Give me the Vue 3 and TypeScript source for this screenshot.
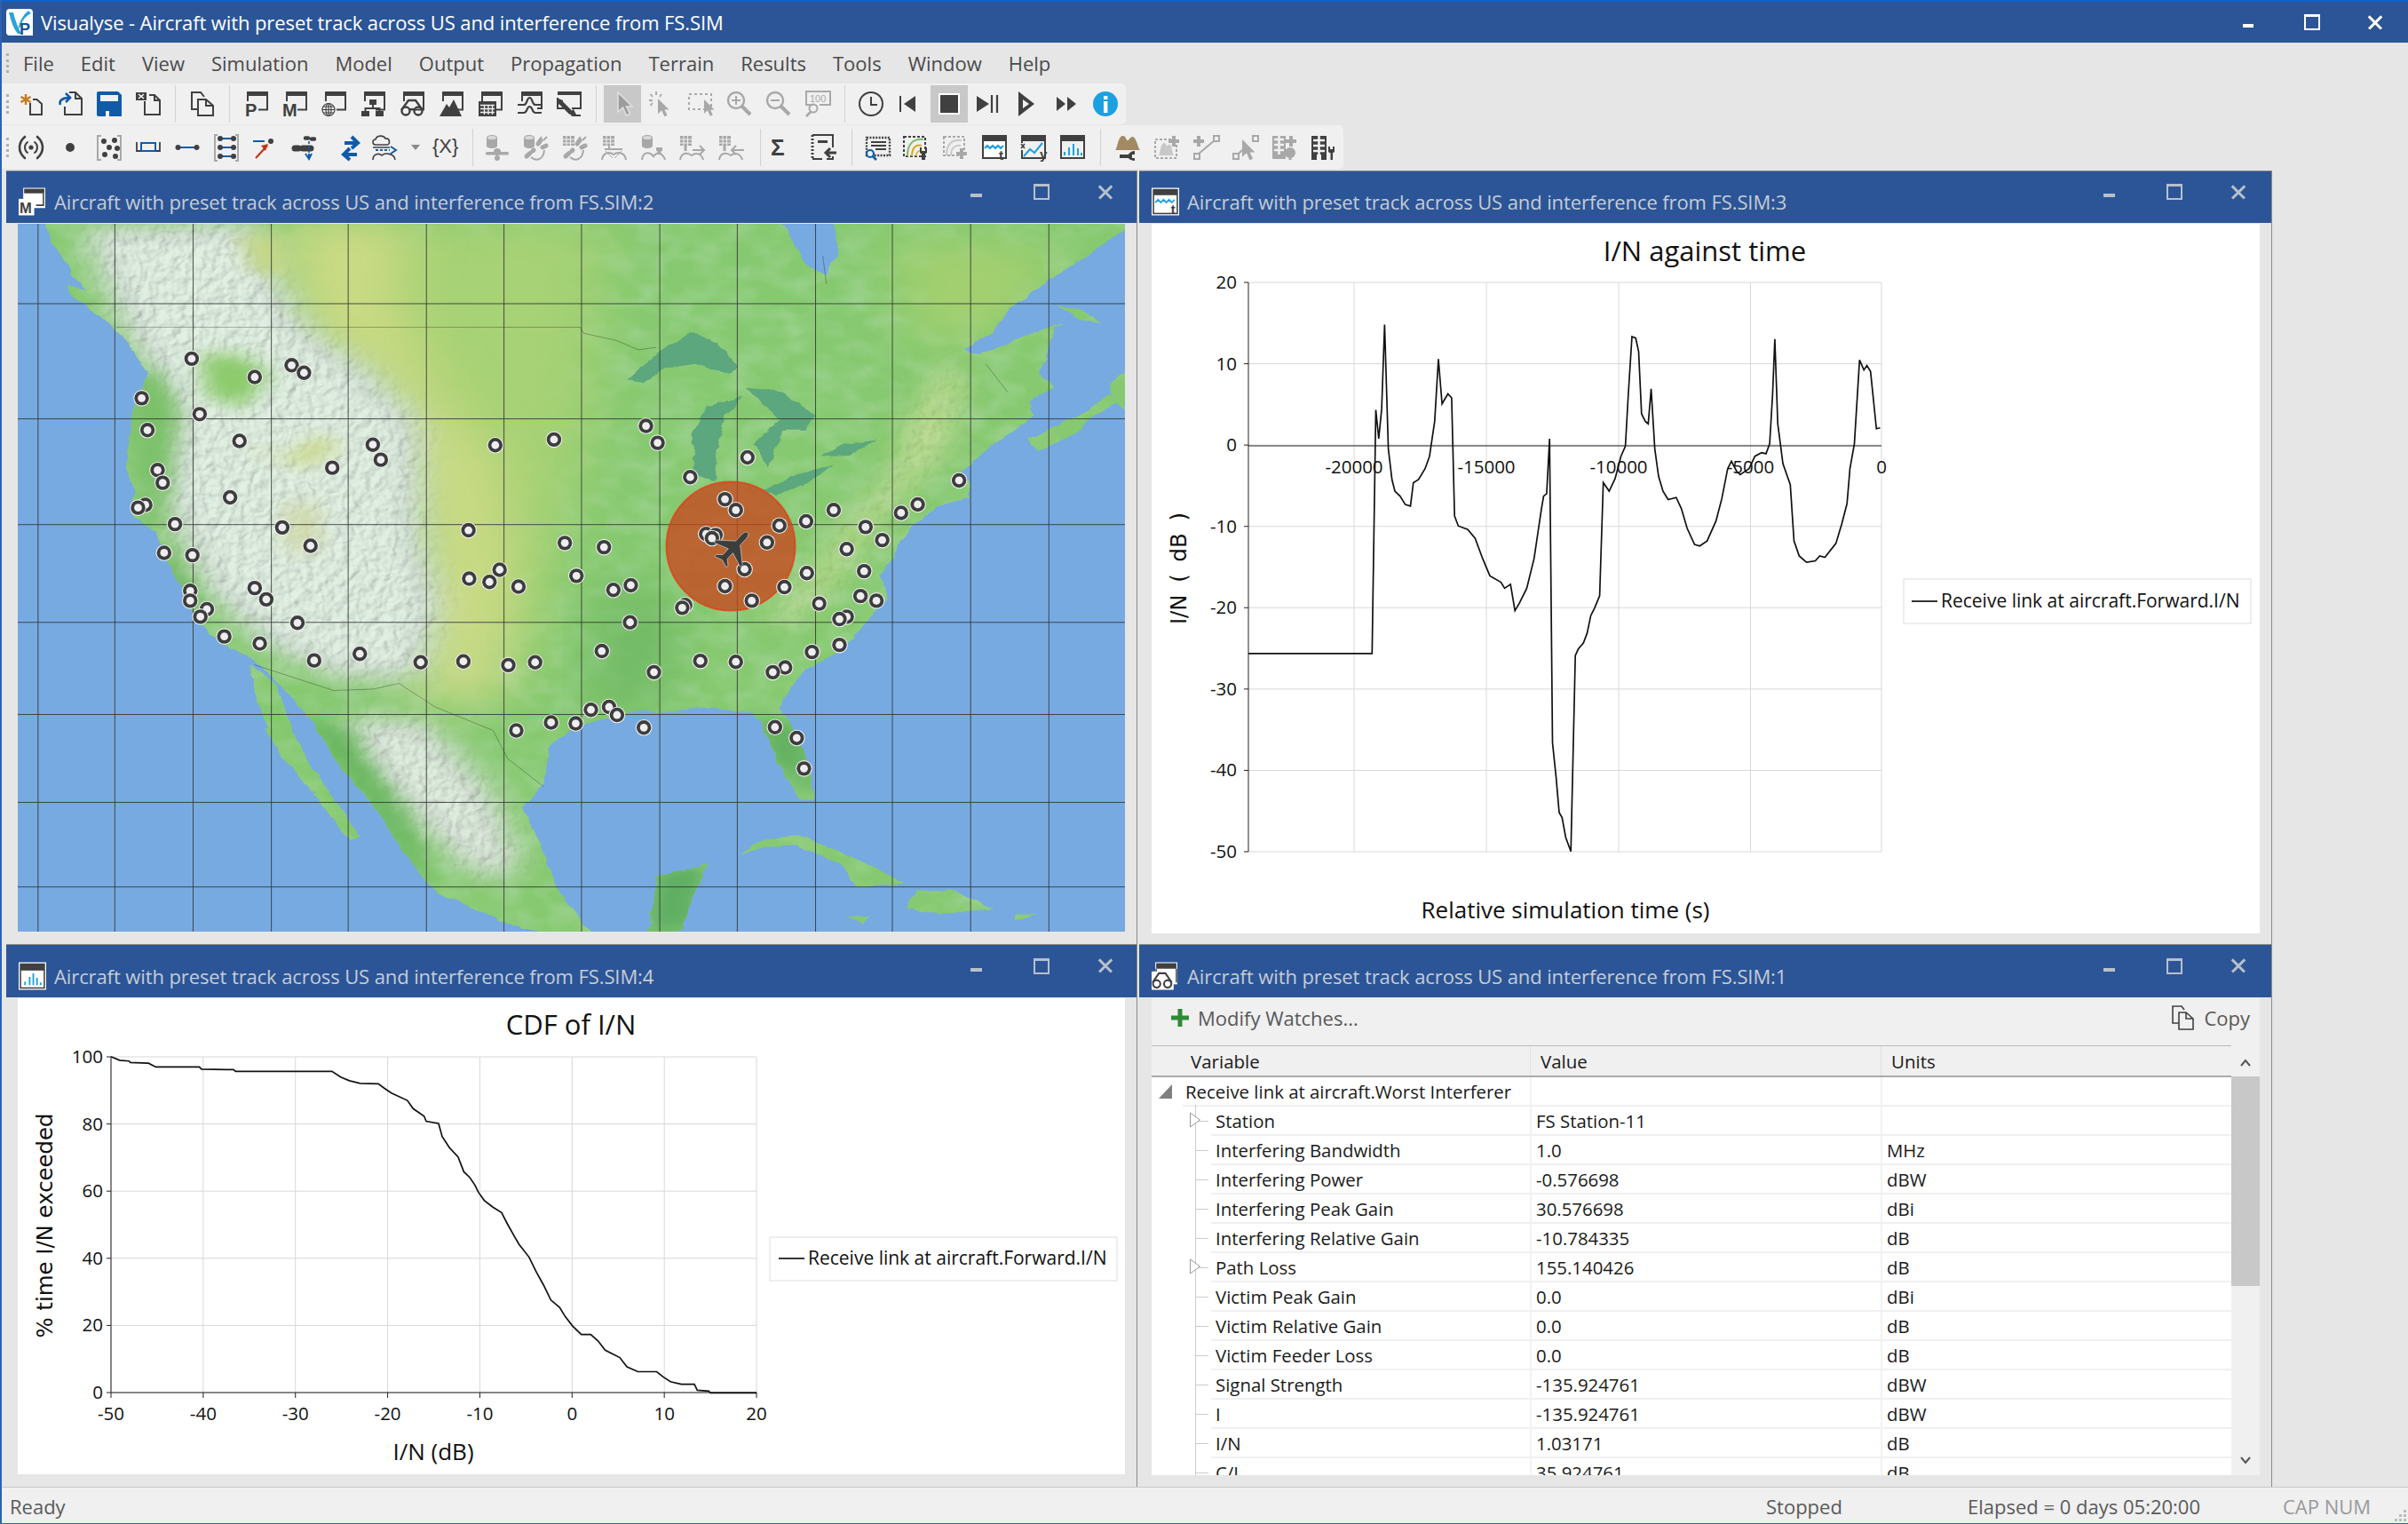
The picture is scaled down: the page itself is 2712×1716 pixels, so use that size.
<script setup lang="ts">
const D = '#404040'
const G = '#a8a8a8'
const B = '#0f5ba8'
const C = '#1ba1e2'

const svgText = (x: number, y: number, s: string, size: number, fill = D, weight = 400) =>
  `<text x="${x}" y="${y}" font-family="Liberation Sans, sans-serif" font-size="${size}" font-weight="${weight}" fill="${fill}">${s}</text>`

const frame = `<path d="M3 0H27V21.5H16V19.5H25V5H5V11H3z" fill="${D}"/>`
const ptr = (x: number, y: number, s: number, fill: string, extra = '') =>
  `<path transform="translate(${x} ${y}) scale(${s})" d="M0 0V22L5.5 17 9.5 26 13.5 24 9.5 16H16Z" fill="${fill}" ${extra}/>`
const cyl = (x: number, y: number) =>
  `<path d="M${x} ${y + 3}c0-4 12-4 12 0v9c0 4-12 4-12 0z" fill="${G}"/><ellipse cx="${x + 6}" cy="${y + 3}" rx="5" ry="2" fill="#d8d8d8"/>`
const grid = (x: number, y: number) =>
  `<rect x="${x}" y="${y}" width="13" height="11" fill="${G}"/><path d="M${x} ${y + 4}h13M${x} ${y + 8}h13M${x + 4} ${y}v11M${x + 8.5} ${y}v11" stroke="#f0f0f0" stroke-width="1"/>`
const sats = `<path d="M3 24l8-7M16 10l3-4M21 14l4-2" stroke="${G}" stroke-width="5" stroke-linecap="round" stroke-dasharray="5 4"/><path d="M8 25c6 5 14 3 15-8" fill="none" stroke="${G}" stroke-width="2"/>`
const tChart = `<rect x="1" y="1" width="26" height="25" fill="#fff" stroke="${D}" stroke-width="2"/><rect x="1" y="1" width="26" height="6" fill="${D}"/><path d="M3 15l3-3 3 3 3-3 3 3 3-3 3 3 3-3" fill="none" stroke="${C}" stroke-width="2"/>`

const icons: Record<string, string> = {
  new: `<path d="M13 13V26H26V14L20.5 9H16" fill="none" stroke="${D}" stroke-width="2"/><path d="M8 3V15M2.5 6 13.5 12M13.5 6 2.5 12" stroke="#c87a1c" stroke-width="2.4"/>`,
  open: `<path d="M13 1H20L27 8V26H8V17M20 1V8H27" fill="none" stroke="${D}" stroke-width="2"/><path d="M3 15C1 10 6 7 13 7M9 2L14 7 9 12" fill="none" stroke="${B}" stroke-width="2.6"/>`,
  save: `<path d="M2 0H24L28 4V28H2Q0 28 0 26V2Q0 0 2 0Z" fill="${B}"/><rect x="4" y="4" width="20" height="7" fill="#f0f0f0"/><rect x="10" y="22" width="4" height="6" fill="#f0f0f0"/>`,
  close: `<path d="M15 4H21L27 10V26H10V11M21 4V10H27" fill="none" stroke="${D}" stroke-width="2"/><rect x="0" y="1" width="12" height="9" fill="${D}"/><path d="M3 3L9 8M9 3L3 8" stroke="#fff" stroke-width="1.5"/>`,
  copy: `<path d="M9 20H2V1H12L16 6M9 9H18L26 16V27H9ZM18 9V16H26" fill="none" stroke="${D}" stroke-width="2"/>`,
  winP: frame + svgText(1, 28, 'P', 20, D, 700),
  winM: frame + svgText(-1, 28, 'M', 20, D, 700),
  winG: frame + `<g fill="none" stroke="${D}" stroke-width="1.2"><circle cx="7" cy="20.5" r="7"/><ellipse cx="7" cy="20.5" rx="3" ry="7"/><path d="M0 20.5H14M1 17H13M1 24H13M7 13.5V27.5"/></g>`,
  winH: frame + `<g fill="${D}"><rect x="9" y="9" width="8" height="6"/><rect x="0" y="22" width="9" height="6"/><rect x="16" y="22" width="9" height="6"/></g><path d="M13 15V20M4.5 22V19H20.5V22" fill="none" stroke="${D}" stroke-width="2"/>`,
  winE: frame + `<g fill="none" stroke="${D}" stroke-width="2.4"><circle cx="6" cy="22" r="4.5"/><circle cx="20" cy="22" r="4.5"/><path d="M1 21L9 10H17L25 21M10 21Q13 19 16 21"/></g>`,
  winT: frame + `<path d="M0 28L8 14 11 18 16 9 25 28Z" fill="${D}"/>`,
  winC: frame + `<rect x="0" y="11" width="20" height="17" fill="${D}"/><path d="M2 15.5H18M2 19.5H18M2 23.5H18M6.5 15V26M11 15V26M15.5 15V26" stroke="#f0f0f0" stroke-width="1.3"/>`,
  winP2: `<path d="M4 0H28V20H22V18H26V5H6V11H4z" fill="${D}"/><path d="M0 15H7C11 15 10 7 13.5 7S16 15 20 15H27M0 24H7C11 24 10 17 13.5 17S16 24 20 24H27" fill="none" stroke="${D}" stroke-width="2.2"/>`,
  winW: `<path d="M1 1H27V19H17M9 19H1V7" fill="none" stroke="${D}" stroke-width="2"/><rect x="1" y="1" width="26" height="3" fill="${D}"/><path d="M5 13L16 24" stroke="${D}" stroke-width="5"/><path d="M2 8L7 10 7 14 3 15Q0 12 2 8ZM14 24L19 20 22 26 17 28Z" fill="${D}"/><path d="M18 27H27" stroke="${D}" stroke-width="2"/>`,
  pointer: ptr(9, 1, 1, '#9c9c9c', 'stroke="#e0e0e0" stroke-width="1.5"'),
  click: ptr(10, 8, 0.78, G) + `<path d="M8 0V4M1.5 3L4 6M0 10H4M1.5 16L4 13M14 3L12 6" stroke="${G}" stroke-width="1.8"/>`,
  select: `<rect x="1" y="3" width="25" height="17" fill="none" stroke="${G}" stroke-width="2" stroke-dasharray="3 3"/>` + ptr(18, 9, 0.72, G),
  zoomIn: `<circle cx="10" cy="10" r="9" fill="none" stroke="${G}" stroke-width="2.4"/><path d="M10 5V15M5 10H15" stroke="${G}" stroke-width="2"/><path d="M16 16L26 26" stroke="${G}" stroke-width="4"/>`,
  zoomOut: `<circle cx="10" cy="10" r="9" fill="none" stroke="${G}" stroke-width="2.4"/><path d="M5 10H15" stroke="${G}" stroke-width="2"/><path d="M16 16L26 26" stroke="${G}" stroke-width="4"/>`,
  zoom100: `<path d="M9 15H1V0H28V15H16" fill="none" stroke="${G}" stroke-width="2"/>` + svgText(5, 12, '100', 11, G) + `<circle cx="9" cy="19" r="4.5" fill="none" stroke="${G}" stroke-width="2"/><path d="M6 23L1 28" stroke="${G}" stroke-width="2.6"/>`,
  clock: `<circle cx="14" cy="14" r="13" fill="none" stroke="${D}" stroke-width="2"/><path d="M14 6V15H21" fill="none" stroke="${D}" stroke-width="2"/>`,
  prev: `<path d="M3 5V23" stroke="${D}" stroke-width="2"/><path d="M20 5V23L7 14Z" fill="${D}"/>`,
  stop: `<rect x="2" y="2" width="24" height="24" fill="#fff"/><rect x="4" y="4" width="20" height="20" fill="${D}"/>`,
  step: `<path d="M1 5V23L15 14Z" fill="${D}"/><path d="M18 4V24M24 4V24" stroke="${D}" stroke-width="2.2"/>`,
  play: `<path fill-rule="evenodd" d="M4 0V28L22 14ZM9 9V19L16 14Z" fill="${D}"/>`,
  ff: `<path d="M3 6V22L13 14ZM15 6V22L25 14Z" fill="${D}"/>`,
  info: `<circle cx="14" cy="14" r="14" fill="${C}"/><rect x="12" y="5" width="4.4" height="4" fill="#fff"/><rect x="12" y="11" width="4.4" height="13" fill="#fff"/>`,

  antenna: `<g fill="none" stroke="${D}" stroke-width="2.6" stroke-linecap="round"><path d="M7 2C-1 9-1 19 7 26M21 2C29 9 29 19 21 26"/><path d="M10 8C6 11 6 17 10 20M18 8C22 11 22 17 18 20" stroke-width="2"/></g><circle cx="14" cy="14" r="2.6" fill="${D}"/>`,
  dot: `<circle cx="14" cy="14" r="5" fill="${D}"/>`,
  dots: `<path d="M5 1H1V28H5M23 1H27V28H23" fill="none" stroke="${G}" stroke-width="2"/><g fill="${D}"><circle cx="8" cy="7" r="3"/><circle cx="20" cy="6" r="3"/><circle cx="14" cy="14" r="3"/><circle cx="23" cy="15" r="3"/><circle cx="9" cy="22" r="3"/><circle cx="21" cy="24" r="3"/></g>`,
  rect: `<path d="M1 8V18H27V8" fill="none" stroke="${D}" stroke-width="1.8"/><rect x="6" y="9" width="16" height="9" fill="none" stroke="${B}" stroke-width="2"/>`,
  line: `<path d="M3 14H25" stroke="${B}" stroke-width="2"/><circle cx="3.5" cy="14" r="3" fill="${D}"/><circle cx="24.5" cy="14" r="3" fill="${D}"/>`,
  links: `<path d="M4 0H1V29H4M24 0H27V29H24" fill="none" stroke="${G}" stroke-width="2"/><path d="M6 4H22M6 14H22M6 24H22" stroke="${B}" stroke-width="2"/><g fill="${D}"><circle cx="7" cy="4" r="3"/><circle cx="22" cy="4" r="3"/><circle cx="7" cy="14" r="3"/><circle cx="22" cy="14" r="3"/><circle cx="7" cy="24" r="3"/><circle cx="22" cy="24" r="3"/></g>`,
  arrow: `<path d="M0 7H13" stroke="${B}" stroke-width="2"/><circle cx="20" cy="7" r="3" fill="${D}"/><path d="M3 26L16 12" stroke="#c0361c" stroke-width="2.2"/><path d="M17 10L9 12 14 18Z" fill="#c0361c"/>`,
  sat: `<path d="M15 3.500h3M22 4.500h3" stroke="${D}" stroke-width="4.500" stroke-linecap="round"/><path d="M3 15H7M12 15H21" stroke="${D}" stroke-width="7" stroke-linecap="round"/><path d="M19 7V22" stroke="${B}" stroke-width="1.6" stroke-dasharray="3 2"/><path d="M15 21L19 27 22 21M19 21V27" fill="none" stroke="${B}" stroke-width="2"/>`,
  arrows: `<path d="M7 9H21M15 2L22 9 15 15" fill="none" stroke="${B}" stroke-width="4"/><path d="M21 22H7M13 15L6 22 13 28" fill="none" stroke="${B}" stroke-width="4"/>`,
  cloud: `<path d="M4 11C0 11 0 5 4 5 5 0 13 0 15 4 20 3 21 10 17 11Z" fill="none" stroke="${D}" stroke-width="1.6"/><path d="M1 14H20" stroke="${D}" stroke-width="1.5"/><path d="M4 17H20" stroke="${B}" stroke-width="2" stroke-dasharray="3 2"/><path d="M21 13L27 17 21 21" fill="none" stroke="${B}" stroke-width="2"/><path d="M1 28C1 21 8 20 11 23 14 20 25 20 26 28" fill="none" stroke="${D}" stroke-width="1.6"/>`,
  caret: `<path d="M9 11H19L14 17Z" fill="#888"/>`,
  braces: svgText(0, 20, '{X}', 22, D),

  g1: cyl(2, 0) + `<circle cx="14" cy="19" r="4" fill="${G}"/><rect x="1" y="19" width="26" height="3.5" rx="1.5" fill="${G}"/><circle cx="14" cy="26" r="3" fill="${G}"/>`,
  g2: cyl(0, 0) + sats + `<path d="M20 2L16 7M22 6L26 2" stroke="${G}" stroke-width="2"/>`,
  g3: grid(0, 1) + sats + `<path d="M20 2L16 7M22 6L26 2" stroke="${G}" stroke-width="2"/>`,
  g4: grid(1, 1) + `<path d="M8 12V16M3 16H23" stroke="${G}" stroke-width="2"/><path d="M0 28C1 20 8 18 13 22 18 18 26 20 27 28" fill="none" stroke="${G}" stroke-width="2"/><path d="M4 18L12 26M22 18L14 26" stroke="${G}" stroke-width="1"/>`,
  g5: cyl(1, 0) + `<path d="M17 16H24M20.5 16V21" stroke="${G}" stroke-width="4"/>` + `<path d="M1 28C2 19 9 18 14 24 18 18 25 21 27 28" fill="none" stroke="${G}" stroke-width="2"/>`,
  g6: grid(0, 1) + `<path d="M6 12V18" stroke="${G}" stroke-width="3"/><path d="M0 28C1 20 8 19 13 23 18 19 24 21 26 28" fill="none" stroke="${G}" stroke-width="2"/><path d="M14 17H27M22 12L27 17 22 22" fill="none" stroke="${G}" stroke-width="2"/>`,
  g7: grid(0, 1) + `<path d="M6 12V18" stroke="${G}" stroke-width="3"/><path d="M0 28C1 20 8 19 13 23 18 19 24 21 26 28" fill="none" stroke="${G}" stroke-width="2"/><path d="M28 17H14M19 12L14 17 19 22" fill="none" stroke="${G}" stroke-width="2"/>`,
  sigma: svgText(3, 23, 'Σ', 26, D, 700),
  importIcon: `<path d="M1 0H24V14M24 24V27H17M12 27H1Z" fill="none" stroke="${D}" stroke-width="2"/><path d="M1 0V27" stroke="${D}" stroke-width="3" stroke-dasharray="2 2"/><rect x="7" y="6" width="11" height="3" fill="${D}"/><path d="M28 20H16M21 15L16 20 21 25" fill="none" stroke="${D}" stroke-width="3"/>`,
  list: `<rect x="2" y="3" width="26" height="20" fill="none" stroke="${D}" stroke-width="2.4" stroke-dasharray="2 1.4"/><path d="M7 8H24M7 12H24M12 16H24" stroke="${D}" stroke-width="2"/><circle cx="6" cy="21" r="4" fill="#f0f0f0" stroke="${B}" stroke-width="2.2"/><path d="M9 24L13 28" stroke="${B}" stroke-width="2.6"/>`,
  contour: `<rect x="0" y="2" width="24" height="22" fill="none" stroke="${D}" stroke-width="2" stroke-dasharray="3 2"/><path d="M4 24C4 8 12 4 22 5" fill="none" stroke="#7cb66a" stroke-width="2"/><path d="M9 24C9 14 14 10 20 12" fill="none" stroke="#d8a820" stroke-width="2"/><path d="M14 24C14 20 16 17 19 18" fill="none" stroke="#d8a820" stroke-width="1.6"/><path d="M22 28V20" stroke="${D}" stroke-width="4"/><path d="M18 14V20Q22 24 26 20V14L24 14V18H20V14Z" fill="${D}"/>`,
  contourAdd: `<rect x="1" y="2" width="23" height="21" fill="none" stroke="${G}" stroke-width="2" stroke-dasharray="3 2"/><path d="M4 23C4 9 11 5 21 6M9 23C9 15 13 11 20 12" fill="none" stroke="#c8c8c8" stroke-width="2"/><path d="M21 15V27M15 21H27" stroke="${G}" stroke-width="4"/>`,
  chartT: tChart + svgText(19, 28, 't', 15, D, 700),
  chartY: `<rect x="1" y="1" width="26" height="25" fill="none" stroke="${D}" stroke-width="2"/><rect x="1" y="1" width="26" height="6" fill="${D}"/><rect x="-1" y="9" width="7" height="8" fill="#f0f0f0"/><path d="M0 10L4 15M4 10L0 15" stroke="${D}" stroke-width="1.6"/><path d="M3 24L10 16 15 20 24 9" fill="none" stroke="${C}" stroke-width="2"/>` + svgText(21, 27, 'y', 15, D, 700),
  chartB: `<rect x="1" y="1" width="26" height="25" fill="#f0f0f0" stroke="${D}" stroke-width="2"/><rect x="1" y="1" width="26" height="6" fill="${D}"/><path d="M5 23V19M10 23V14M15 23V10M20 23V15M24 23V20" stroke="${C}" stroke-width="2"/>`,
  mountain: `<path d="M0 17C2 17 3 2 8 1 12 0 12 6 14 6S16 2 20 2C24 3 26 16 28 17Z" fill="#a38a63"/><path d="M5 24H15" stroke="${D}" stroke-width="4"/><path d="M22 18C16 18 14 23 14 24S16 29 22 29V26H19V22H22Z" fill="${D}"/>`,
  mountainAdd: `<rect x="1" y="5" width="24" height="21" fill="none" stroke="${G}" stroke-width="2" stroke-dasharray="3 2"/><path d="M5 23C7 20 7 9 11 9 13 9 14 13 14 13S16 10 18 11C20 13 20 20 22 23Z" fill="#c8c8c8"/><path d="M22 1V13M16 7H28" stroke="${G}" stroke-width="4"/>`,
  pathAdd: `<rect x="23" y="1" width="6" height="6" fill="none" stroke="${G}" stroke-width="2"/><rect x="1" y="21" width="6" height="6" fill="none" stroke="${G}" stroke-width="2"/><path d="M6 21L24 6" stroke="${G}" stroke-width="2"/><path d="M6 1V13M0 7H12" stroke="${G}" stroke-width="4"/>`,
  pathPtr: `<rect x="23" y="1" width="6" height="6" fill="none" stroke="${G}" stroke-width="2"/><rect x="1" y="21" width="6" height="6" fill="none" stroke="${G}" stroke-width="2"/><path d="M7 21L12 16" stroke="${G}" stroke-width="2"/>` + ptr(11, 5, 0.9, G),
  cityAdd: `<rect x="1" y="1" width="15" height="26" fill="${G}"/><path d="M3 5H14M3 11H14M3 17H14M8.5 1V22" stroke="#f0f0f0" stroke-width="2.6"/><path d="M22 1V13M16 7H28" stroke="${G}" stroke-width="4"/><circle cx="21" cy="20" r="6" fill="${G}"/><path d="M21 22V28" stroke="${G}" stroke-width="3"/>`,
  cityTool: `<rect x="1" y="1" width="17" height="27" fill="${D}"/><path d="M3 6H16M3 12H16M3 18H16M9.5 1V22" stroke="#f0f0f0" stroke-width="2.6"/><rect x="7" y="22" width="5" height="6" fill="#f0f0f0"/><path d="M20 13V19Q23.5 22 27 19V13H25V16H22V13ZM22.5 20V28H25V20Z" fill="${D}"/>`,
  // small window icons in the child title bars
  tMap: `<rect x="5" y="0" width="24" height="22" fill="#fff"/><rect x="6" y="1" width="22" height="5" fill="${D}"/><path d="M27 6V19H19" fill="none" stroke="${D}" stroke-width="1.5"/><rect x="0" y="12" width="17" height="18" fill="#fff"/>` + svgText(1, 28, 'M', 16, D, 700),
  tLine: `<rect x="0" y="0" width="30" height="30" fill="#fff"/><rect x="2" y="2" width="26" height="26" fill="#fff" stroke="${D}" stroke-width="1.5"/><rect x="2" y="2" width="26" height="6" fill="${D}"/><path d="M4 16l3-3 3 3 3-3 3 3 3-3 3 3 3-3" fill="none" stroke="${C}" stroke-width="1.8"/>` + svgText(21, 29, 't', 14, D, 700),
  tBars: `<rect x="0" y="0" width="30" height="30" fill="#fff"/><rect x="2" y="2" width="26" height="26" fill="#fff" stroke="${D}" stroke-width="1.5"/><rect x="2" y="2" width="26" height="7" fill="${D}"/><path d="M7 25V21M12 25V16M16 25V12M20 25V17M24 25V22" stroke="${C}" stroke-width="1.8"/>`,
  tWatch: `<rect x="4" y="0" width="24" height="24" fill="#fff"/><rect x="5" y="1" width="22" height="6" fill="${D}"/><path d="M27 7V22M5 7V12" stroke="${D}" stroke-width="1.4" fill="none"/><rect x="0" y="10" width="24" height="20" fill="#fff"/><g fill="none" stroke="${D}" stroke-width="2"><circle cx="5.5" cy="23.5" r="4"/><circle cx="17.5" cy="23.5" r="4"/><path d="M1 22L8 12H15L22 22"/></g>`,
}

type Item = string | number

const rowOne: Item[] = ['new', 'open', 'save', 'close', 'sep', 'copy', 'sep', 'winP', 'winM', 'winG', 'winH', 'winE', 'winT', 'winC', 'winP2', 'winW', 'sep16', 'pointer', 'click', 'select', 'zoomIn', 'zoomOut', 'zoom100', 'sep16', 'clock', 'prev', 'stop', 'step', 'play', 'ff', 'info']
const rowTwo: Item[] = ['antenna', 'dot', 'dots', 'rect', 'line', 'links', 'arrow', 'sat', 8, 'arrows', 'cloud', 'caret', 'braces', 17, 'bar', 5, 'g1', 'g2', 'g3', 'g4', 'g5', 'g6', 'g7', 10, 'bar', 'sigma', 5, 'importIcon', 9, 'bar', 6, 'list', 'contour', 'contourAdd', 'chartT', 'chartY', 'chartB', 9, 'bar', 8, 'mountain', 'mountainAdd', 'pathAdd', 'pathPtr', 'cityAdd', 'cityTool']
const narrow: Record<string, number> = { cloud: 32, caret: 38, braces: 28 }
const selected = new Set(['pointer', 'stop'])

const menus = ['File', 'Edit', 'View', 'Simulation', 'Model', 'Output', 'Propagation', 'Terrain', 'Results', 'Tools', 'Window', 'Help']

const zoomToMap = (x: number, y: number) => [(x - 24) * 0.8161, (y - 22) * 0.5292]

const gridX = [52, 158, 266, 374, 480, 588, 695, 802, 910, 1017, 1125, 1231, 1339, 1447]
const gridY = [192, 437, 662, 870, 1066, 1253, 1433]
const mapGridX = gridX.map((x) => zoomToMap(x, 0)[0])
const mapGridY = gridY.map((y) => zoomToMap(0, y)[1])

const stationsRaw = [[264,309],[351,348],[402,323],[419,339],[195,393],[275,427],[203,461],[330,484],[514,492],[525,524],[458,541],[683,493],[764,481],[891,452],[907,488],[1031,519],[952,561],[217,546],[224,573],[317,604],[200,620],[190,626],[241,661],[389,668],[428,707],[226,722],[265,727],[646,674],[779,701],[833,710],[1000,608],[1015,631],[1075,664],[1112,655],[1150,631],[1194,667],[1243,637],[1266,619],[1323,568],[1217,695],[1168,714],[974,682],[987,684],[982,691],[1058,700],[1027,757],[1000,793],[1037,824],[1082,795],[1113,765],[1192,761],[1187,814],[1209,824],[1130,830],[1168,858],[1158,863],[1158,918],[1120,933],[1083,966],[1066,976],[1015,954],[966,952],[902,976],[830,931],[869,870],[945,833],[941,839],[846,801],[870,791],[795,771],[715,794],[689,758],[675,784],[647,777],[262,803],[262,824],[285,842],[276,858],[351,797],[367,821],[410,871],[309,900],[358,915],[433,951],[496,937],[580,955],[639,953],[701,961],[738,955],[815,1056],[840,1050],[851,1067],[794,1085],[760,1083],[712,1100],[888,1094],[1069,1093],[1099,1116],[1109,1181]]
const stations = stationsRaw.map(([x, y]) => zoomToMap(x, y))
const coverage = zoomToMap(1008, 708)
const plane = zoomToMap(1012, 711)

const toPoints = (raw: number[][], fx: (x: number) => number, fy: (y: number) => number) =>
  raw.map(([x, y]) => `${fx(x).toFixed(1)},${fy(y).toFixed(1)}`).join(' ')

const timeRaw = [[152,971],[320,971],[325,482],[329,540],[333,480],[337,311],[342,560],[347,622],[351,645],[358,655],[365,672],[372,675],[376,628],[383,622],[392,600],[398,575],[405,505],[410,380],[415,470],[423,450],[428,458],[432,695],[437,715],[450,722],[460,740],[470,780],[480,815],[495,828],[500,840],[508,832],[514,885],[520,870],[530,840],[540,780],[550,680],[553,655],[557,650],[561,540],[565,1150],[570,1220],[574,1290],[578,1300],[583,1340],[590,1368],[596,975],[600,962],[607,950],[612,930],[617,895],[622,880],[629,855],[634,628],[642,645],[650,620],[658,575],[664,555],[668,450],[673,335],[678,338],[682,365],[686,490],[691,505],[695,510],[699,440],[704,560],[709,615],[715,645],[722,662],[733,658],[740,680],[748,720],[758,752],[765,755],[775,745],[787,705],[795,660],[803,600],[808,585],[815,605],[820,612],[832,600],[840,575],[849,568],[855,570],[860,550],[864,450],[867,340],[871,510],[878,590],[888,632],[893,745],[900,775],[910,788],[922,785],[928,775],[935,778],[950,750],[958,710],[965,670],[969,600],[975,550],[982,382],[988,402],[992,393],[997,405],[1005,520],[1010,518]]
const timeLine = toPoints(timeRaw, (x) => 1280 + x / 1.206, (y) => 190 + y / 1.782)

const cdfRaw = [[153,310],[165,320],[178,322],[180,326],[205,328],[215,338],[275,338],[278,344],[322,345],[325,350],[458,350],[470,365],[482,375],[497,382],[522,383],[530,395],[540,408],[562,428],[570,450],[585,470],[588,484],[605,490],[610,525],[620,555],[632,580],[640,620],[648,635],[655,655],[660,675],[668,697],[680,715],[692,730],[700,760],[710,795],[716,815],[730,850],[740,890],[750,925],[760,965],[772,985],[780,1010],[790,1035],[802,1058],[815,1058],[825,1075],[835,1100],[855,1120],[865,1145],[880,1158],[906,1158],[915,1172],[925,1185],[940,1192],[958,1192],[962,1208],[978,1210],[980,1215],[1044,1215]]
const cdfLine = toPoints(cdfRaw, (x) => x / 1.225, (y) => 1060 + y / 2.39)

const timeYTicks = [20, 10, 0, -10, -20, -30, -40, -50].map((v) => ({ v, y: 317 + (20 - v) * 9.157 }))
const timeXTicks = [[-20000, 1525], [-15000, 1674], [-10000, 1823], [-5000, 1971.5], [0, 2119]].map(([v, x]) => ({ v, x }))
const cdfYTicks = [100, 80, 60, 40, 20, 0].map((v) => ({ v, y: 1568 - v * 3.78 }))
const cdfXTicks = [-50, -40, -30, -20, -10, 0, 10, 20].map((v) => ({ v, x: 125 + (v + 50) * 10.386 }))

const rows = [
  { name: 'Station', value: 'FS Station-11', units: '', more: true },
  { name: 'Interfering Bandwidth', value: '1.0', units: 'MHz' },
  { name: 'Interfering Power', value: '-0.576698', units: 'dBW' },
  { name: 'Interfering Peak Gain', value: '30.576698', units: 'dBi' },
  { name: 'Interfering Relative Gain', value: '-10.784335', units: 'dB' },
  { name: 'Path Loss', value: '155.140426', units: 'dB', more: true },
  { name: 'Victim Peak Gain', value: '0.0', units: 'dBi' },
  { name: 'Victim Relative Gain', value: '0.0', units: 'dB' },
  { name: 'Victim Feeder Loss', value: '0.0', units: 'dB' },
  { name: 'Signal Strength', value: '-135.924761', units: 'dBW' },
  { name: 'I', value: '-135.924761', units: 'dBW' },
  { name: 'I/N', value: '1.03171', units: 'dB' },
  { name: 'C/I', value: '35.924761', units: 'dB' },
]

const controls = ['min', 'max', 'close']
const SIM = 'Aircraft with preset track across US and interference from FS.SIM'
</script>

<template>
  <div class="app">
    <header class="titlebar">
      <svg class="logo" width="32" height="33" viewBox="0 0 32 33">
        <path d="M5 1H27Q31 1 31 5V31H5Q1 31 1 27V5Q1 1 5 1Z" fill="#fff" />
        <path d="M4 5Q8 22 14 29H18Q12 18 9 5Z" fill="#2aa3dc" />
        <path d="M26 3Q17 10 14 24L17 21Q20 10 29 6Z" fill="#2aa3dc" />
        <text x="16" y="30" font-family="Liberation Sans, sans-serif" font-size="18" font-weight="700" fill="#1b4f8f">P</text>
      </svg>
      <span class="app-title">Visualyse - {{ SIM }}</span>
      <div class="main-controls">
        <span v-for="c in controls" :key="c" :class="['ctl', c]"></span>
      </div>
    </header>

    <nav class="menubar">
      <span class="grip grip-menu"></span>
      <span v-for="m in menus" :key="m" class="menu-item">{{ m }}</span>
    </nav>

    <div class="tb-row tb-one">
      <span class="grip"></span>
      <template v-for="(item, i) in rowOne" :key="i">
        <span v-if="item === 'sep'" class="sep"></span>
        <span v-else-if="item === 'sep16'" class="sep tight"></span>
        <span v-else class="btn" :class="{ on: selected.has(item as string) }">
          <svg width="28" height="28" viewBox="0 0 28 28" class="ico" v-html="icons[item]"></svg>
        </span>
      </template>
    </div>
    <div class="tb-row tb-two">
      <span class="grip"></span>
      <template v-for="(item, i) in rowTwo" :key="i">
        <span v-if="typeof item === 'number'" :style="{ width: item + 'px' }"></span>
        <span v-else-if="item === 'bar'" class="bar"></span>
        <span v-else class="btn" :style="narrow[item] ? { width: narrow[item] + 'px' } : undefined">
          <svg width="28" height="28" viewBox="0 0 28 28" class="ico" v-html="icons[item]"></svg>
        </span>
      </template>
    </div>

    <main class="mdi">
      <!-- map window -->
      <section class="win">
        <div class="win-title">
          <svg width="31" height="32" viewBox="0 0 30 30" class="ico" v-html="icons.tMap"></svg>
          <span class="win-name">{{ SIM }}:2</span>
          <div class="win-controls"><span v-for="c in controls" :key="c" :class="['ctl', c]"></span></div>
        </div>
        <div class="client map-client">
          <svg width="1247" height="797" viewBox="0 0 1247 797" class="canvas">
            <defs>
              <filter id="coast" x="-5%" y="-5%" width="110%" height="110%">
                <feTurbulence type="fractalNoise" baseFrequency="0.04" numOctaves="4" seed="4" result="n" />
                <feDisplacementMap in="SourceGraphic" in2="n" scale="11" xChannelSelector="R" yChannelSelector="G" />
                <feGaussianBlur stdDeviation="0.6" />
              </filter>
              <filter id="soft" x="-40%" y="-40%" width="180%" height="180%"><feGaussianBlur stdDeviation="42" /></filter>
              <filter id="soft2" x="-40%" y="-40%" width="180%" height="180%"><feGaussianBlur stdDeviation="16" /></filter>
              <filter id="rock" x="-15%" y="-15%" width="130%" height="130%">
                <feGaussianBlur in="SourceGraphic" stdDeviation="24" result="s" />
                <feTurbulence type="fractalNoise" baseFrequency="0.075 0.05" numOctaves="2" seed="11" result="n" />
                <feDiffuseLighting in="n" surfaceScale="3.2" diffuseConstant="1.05" lighting-color="#fff" result="l">
                  <feDistantLight azimuth="225" elevation="62" />
                </feDiffuseLighting>
                <feGaussianBlur in="l" stdDeviation="0.8" result="lb" />
                <feComposite in="lb" in2="s" operator="arithmetic" k1="1.12" k2="0" k3="0" k4="0" />
              </filter>
              <filter id="mottle" x="0" y="0" width="100%" height="100%">
                <feTurbulence type="fractalNoise" baseFrequency="0.025" numOctaves="3" seed="7" />
                <feGaussianBlur stdDeviation="3" />
                <feColorMatrix values="0 0 0 0 0.42  0 0 0 0 0.70  0 0 0 0 0.40  1.1 0 0 0 -0.42" />
              </filter>
              <clipPath id="landClip">
                <path d="M60 22L70 60 100 130 130 180 170 240 180 290 205 340 185 400 178 470 175 540 185 600 180 640 215 680 230 740 255 810 270 860 300 910 345 945 385 1000 420 1060 470 1180 520 1270 570 1390 600 1440 650 1480 700 1510 745 1530H815L770 1440 745 1340 720 1265 750 1210 760 1130 800 1090 880 1060 930 1062 960 1050 1040 1062 1060 1120 1080 1190 1105 1248H1122L1115 1180 1090 1080 1075 1050 1100 985 1160 930 1195 870 1225 820 1215 770 1235 720 1250 680 1290 625 1335 605 1340 570 1310 575 1340 530 1390 470 1425 430 1420 400 1455 370 1435 340 1455 245 1470 235 1440 245 1350 300 1330 290 1370 250 1400 190 1450 140 1500 90 1560 25V10H50Z" />
                <path d="M345 960L380 1000 400 1085 425 1170 470 1260 495 1325 480 1332 440 1250 395 1165 375 1120 355 1040Z" />
                <path d="M90 150L130 170 190 255 180 280 140 220 100 180Z" />
                <path d="M1420 480L1500 420 1530 385 1542 398 1470 480 1430 505Z" />
                <path d="M1460 198L1490 205 1520 232 1490 225Z" />
                <path d="M1530 365L1552 335V420L1535 395Z" />
                <path d="M1020 1365L1050 1335 1100 1322 1170 1365 1250 1425 1180 1435 1160 1385 1100 1345 1050 1350Z" />
                <path d="M1265 1442L1310 1438 1370 1478 1300 1490 1250 1480Z" />
                <path d="M1165 1495L1200 1495 1190 1510Z M1400 1490H1432L1400 1505Z" />
                <path d="M895 1530L905 1410 975 1385 950 1480 940 1530Z" />
              </clipPath>
            </defs>
            <rect width="1247" height="797" fill="#77aae1" />
            <g transform="scale(0.8161 0.5292) translate(-24 -22)">
              <g filter="url(#coast)">
                <g clip-path="url(#landClip)">
                  <rect x="0" y="0" width="1600" height="1560" fill="#86c96f" />
                  <rect x="0" y="0" width="1600" height="1560" filter="url(#mottle)" />
                  <path d="M380 20H830L810 480 730 900 600 900 560 400 420 260Z" fill="#a7d274" filter="url(#soft)" />
                  <path d="M400 20H560L540 180 620 420 680 520 700 720 710 1000 640 1060 570 1020 590 700 540 380 430 240Z" fill="#d2dc88" opacity=".9" filter="url(#soft)" />
                  <path d="M1230 60L1450 70 1420 200 1280 300Z" fill="#a4d06e" filter="url(#soft)" />
                  <path d="M110 30L350 20 395 170 430 250 500 320 580 440 585 700 610 830 580 990 470 990 370 925 280 800 225 620 230 400 170 250Z" fill="#d6e4d8" filter="url(#rock)" />
                  <path d="M470 1070L590 1080 680 1230 720 1390 665 1420 590 1320 510 1190Z" fill="#d4e2d4" filter="url(#rock)" />
                  <path d="M275 295L345 305 372 350 330 415 285 385Z" fill="#8ccb6c" filter="url(#soft2)" />
                  <path d="M335 490L420 540 470 500 440 470 380 530Z" fill="#cbd98e" filter="url(#soft2)" />
                  <path d="M330 40L390 50 400 140 350 120Z" fill="#c4d784" filter="url(#soft2)" />
                  <path d="M395 610L440 620 440 720 395 720Z" fill="#cdd6a0" opacity=".8" filter="url(#soft2)" />
                  <path d="M175 350L215 330 245 420 225 620 215 680 195 640Z" fill="#79c068" filter="url(#soft2)" />
                  <path d="M218 690L248 770 280 850 262 850 225 770Z" fill="#5ea954" filter="url(#soft2)" />
                  <path d="M410 1060L480 1200 560 1370 600 1430 555 1280 475 1100Z" fill="#62b25a" filter="url(#soft2)" />
                  <path d="M1060 870L1110 790 1160 690 1240 540 1260 440 1300 330 1330 340 1300 500 1220 640 1140 800 1080 880Z" fill="#d8e6a4" opacity=".75" filter="url(#rock)" />
                  <path d="M850 760L930 860 900 1060 820 1060Z" fill="#6cb662" filter="url(#soft)" />
                  <path d="M1040 1060L1110 1100 1120 1250 1060 1160Z" fill="#62b060" filter="url(#soft2)" />
                  <path d="M900 1400L980 1380 950 1530H890Z" fill="#5fae64" filter="url(#soft2)" />
                </g>
              </g>
              <!-- Hudson bay, lakes -->
              <path d="M1078 20H1150L1157 78 1140 130 1110 108 1095 60Z" fill="#77aae1" filter="url(#coast)" />
              <g fill="#5ba77d" filter="url(#coast)">
                <path d="M865 355L905 300 955 250 990 275 1020 325 1005 345 960 320 915 330 890 360Z" />
                <path d="M955 560L955 470 975 410 1025 390 1000 430 990 490 985 570Z" />
                <path d="M1030 370L1080 380 1125 430 1110 460 1080 460 1060 540 1040 490 1075 440Z" />
                <path d="M1055 590L1100 555 1148 535 1120 570 1070 600Z" />
                <path d="M1130 518L1165 490 1210 482 1170 515Z" />
              </g>
              <g fill="none" stroke="#000" stroke-opacity=".35" stroke-width="1.2">
                <path d="M160 242H800L805 255 850 270 880 290 905 285" />
                <path d="M350 960L460 1015 515 1012 550 1000 600 1050 640 1075 680 1100 700 1160 750 1220" />
                <path d="M1135 90L1140 150M1360 320L1390 380" />
              </g>
            </g>
            <g stroke="#333" stroke-opacity=".85">
              <line v-for="x in mapGridX" :key="x" :x1="x" :x2="x" y1="0" y2="797" />
              <line v-for="y in mapGridY" :key="y" x1="0" x2="1247" :y1="y" :y2="y" />
            </g>
            <circle :cx="coverage[0]" :cy="coverage[1]" r="72.5" fill="#c9451c" fill-opacity=".76" stroke="#e0401c" stroke-opacity=".8" stroke-width="2" />
            <g v-for="(s, i) in stations" :key="i">
              <circle :cx="s[0]" :cy="s[1]" r="9.3" fill="#eee" />
              <circle :cx="s[0]" :cy="s[1]" r="8.200" fill="#3d3d3d" />
              <circle :cx="s[0]" :cy="s[1]" r="4.400" fill="#eeeef0" />
            </g>
            <path :transform="`translate(${plane[0]} ${plane[1]}) rotate(43)`" d="M0-23C2.500-23 3.500-20 3.500-16V-7L20 7V11L3.500 5V14L9 19V22L0 19-9 22V19L-3.500 14V5L-20 11V7L-3.500-7V-16C-3.500-20-2.500-23 0-23Z" fill="#3d3d3d" stroke="#ddd" stroke-width=".6" />
          </svg>
        </div>
      </section>

      <!-- I/N against time -->
      <section class="win win-right">
        <div class="win-title">
          <svg width="31" height="32" viewBox="0 0 30 30" class="ico" v-html="icons.tLine"></svg>
          <span class="win-name">{{ SIM }}:3</span>
          <div class="win-controls"><span v-for="c in controls" :key="c" :class="['ctl', c]"></span></div>
        </div>
        <div class="client chart-client">
          <svg width="1247" height="799" viewBox="1297 251 1247 799" class="canvas chart">
            <line v-for="t in timeXTicks" :key="t.v" :x1="t.x" :x2="t.x" y1="317" y2="958" class="gridline" />
            <line v-for="t in timeYTicks" :key="t.v" x1="1406" x2="2119" :y1="t.y" :y2="t.y" class="gridline" />
            <line x1="1401" x2="1406" v-for="t in timeYTicks" :key="'m' + t.v" :y1="t.y" :y2="t.y" class="axis" />
            <line x1="1406" x2="1406" y1="317" y2="958" class="axis" />
            <line x1="1406" x2="2119" y1="501" y2="501" class="axis" />
            <text x="1920" y="293" text-anchor="middle" class="c-title">I/N against time</text>
            <text v-for="t in timeYTicks" :key="'l' + t.v" x="1393" :y="t.y + 7" text-anchor="end" class="c-tick">{{ t.v }}</text>
            <text v-for="t in timeXTicks" :key="'x' + t.v" :x="t.x" y="532" text-anchor="middle" class="c-tick">{{ t.v }}</text>
            <polyline :points="timeLine" class="series" />
            <text x="1763" y="1033" text-anchor="middle" class="c-axis">Relative simulation time (s)</text>
            <text transform="translate(1336 639) rotate(-90)" text-anchor="middle" class="c-side spaced">I/N ( dB )</text>
            <rect x="2144" y="651" width="391" height="50" class="legend" />
            <line x1="2153" x2="2182" y1="676" y2="676" class="series" />
            <text x="2186" y="683" class="c-legend">Receive link at aircraft.Forward.I/N</text>
          </svg>
        </div>
      </section>

      <!-- CDF -->
      <section class="win">
        <div class="win-title low">
          <svg width="31" height="32" viewBox="0 0 30 30" class="ico" v-html="icons.tBars"></svg>
          <span class="win-name">{{ SIM }}:4</span>
          <div class="win-controls"><span v-for="c in controls" :key="c" :class="['ctl', c]"></span></div>
        </div>
        <div class="client chart-client">
          <svg width="1247" height="536" viewBox="20 1124 1247 536" class="canvas chart">
            <line v-for="t in cdfXTicks" :key="t.v" :x1="t.x" :x2="t.x" y1="1190" y2="1568" class="gridline" />
            <line v-for="t in cdfYTicks" :key="t.v" x1="125" x2="852" :y1="t.y" :y2="t.y" class="gridline" />
            <line x1="120" x2="125" v-for="t in cdfYTicks" :key="'m' + t.v" :y1="t.y" :y2="t.y" class="axis" />
            <line v-for="t in cdfXTicks" :key="'n' + t.v" :x1="t.x" :x2="t.x" y1="1568" y2="1574" class="axis" />
            <line x1="125" x2="125" y1="1190" y2="1568" class="axis" />
            <line x1="125" x2="852" y1="1568" y2="1568" class="axis" />
            <text x="643" y="1165" text-anchor="middle" class="c-title">CDF of I/N</text>
            <text v-for="t in cdfYTicks" :key="'l' + t.v" x="116" :y="t.y + 7" text-anchor="end" class="c-tick">{{ t.v }}</text>
            <text v-for="t in cdfXTicks" :key="'x' + t.v" :x="t.x" y="1599" text-anchor="middle" class="c-tick">{{ t.v }}</text>
            <polyline :points="cdfLine" class="series" />
            <text x="488" y="1644" text-anchor="middle" class="c-axis">I/N (dB)</text>
            <text transform="translate(59 1380) rotate(-90)" text-anchor="middle" class="c-side">% time I/N exceeded</text>
            <rect x="867" y="1393" width="391" height="49" class="legend" />
            <line x1="877" x2="906" y1="1417" y2="1417" class="series" />
            <text x="910" y="1424" class="c-legend">Receive link at aircraft.Forward.I/N</text>
          </svg>
        </div>
      </section>

      <!-- watches -->
      <section class="win win-right">
        <div class="win-title low">
          <svg width="31" height="32" viewBox="0 0 30 30" class="ico" v-html="icons.tWatch"></svg>
          <span class="win-name">{{ SIM }}:1</span>
          <div class="win-controls"><span v-for="c in controls" :key="c" :class="['ctl', c]"></span></div>
        </div>
        <div class="client watches">
          <div class="watch-bar">
            <svg width="20" height="20" viewBox="0 0 20 20"><path d="M7.500 0H12.500V7.500H20V12.500H12.500V20H7.500V12.500H0V7.500H7.500Z" fill="#2e8b35" /></svg>
            <span class="watch-btn">Modify Watches...</span>
            <span class="spacer"></span>
            <svg width="26" height="28" viewBox="0 0 26 28"><path d="M8 20H1V1H11L14 5M8 8H16L24 15V27H8ZM16 8V15H24" fill="none" stroke="#404040" stroke-width="1.6" /></svg>
            <span class="watch-btn">Copy</span>
          </div>
          <div class="grid-wrap">
            <div class="grid">
              <div class="grid-head">
                <span>Variable</span><span>Value</span><span>Units</span>
              </div>
              <div class="grid-row top">
                <span class="cell name">
                  <svg class="caret-open" width="16" height="18" viewBox="0 0 16 18"><path d="M15 1V17H0Z" fill="#808080" /></svg>
                  Receive link at aircraft.Worst Interferer
                </span>
                <span class="cell"></span><span class="cell"></span>
              </div>
              <div v-for="r in rows" :key="r.name" class="grid-row">
                <span class="cell name child">
                  <svg v-if="r.more" class="caret" width="14" height="18" viewBox="0 0 14 18"><path d="M1.500 1V17L12.500 9Z" fill="#fff" stroke="#999" /></svg>
                  {{ r.name }}
                </span>
                <span class="cell">{{ r.value }}</span>
                <span class="cell">{{ r.units }}</span>
              </div>
            </div>
            <div class="scroll">
              <svg width="14" height="10" viewBox="0 0 14 10" class="chev"><path d="M2 8L7 2 12 8" fill="none" stroke="#555" stroke-width="2" /></svg>
              <div class="thumb"></div>
              <span class="spacer"></span>
              <svg width="14" height="10" viewBox="0 0 14 10" class="chev"><path d="M2 2L7 8 12 2" fill="none" stroke="#555" stroke-width="2" /></svg>
            </div>
          </div>
        </div>
      </section>
    </main>

    <footer class="status">
      <span class="st-ready">Ready</span>
      <span class="st-stop">Stopped</span>
      <span class="st-elapsed">Elapsed = 0 days 05:20:00</span>
      <span class="st-keys">CAP NUM</span>
      <svg class="st-grip" width="18" height="18" viewBox="0 0 18 18"><g fill="#bbb"><rect x="13" y="3" width="3" height="3" /><rect x="13" y="8" width="3" height="3" /><rect x="13" y="13" width="3" height="3" /><rect x="8" y="8" width="3" height="3" /><rect x="8" y="13" width="3" height="3" /><rect x="3" y="13" width="3" height="3" /></g></svg>
    </footer>
  </div>
</template>

<style>
html,
body {
  margin: 0;
  background: #e6e6e6;
}
</style>

<style scoped>
.app {
  width: 2712px;
  height: 1716px;
  box-sizing: border-box;
  display: flex;
  flex-direction: column;
  background: #e6e6e6;
  border-left: 2px solid #2b62b4;
  border-bottom: 1px solid #2b62b4;
  overflow: hidden;
  font-family: "Open Sans", sans-serif;
  color: #404040;
}

.ico {
  display: block;
  overflow: visible;
  flex: none;
}

.titlebar {
  height: 48px;
  flex: none;
  display: flex;
  align-items: center;
  background: #2b5597;
  border-top: 2px solid #0f62c8;
  box-sizing: border-box;
  color: #fff;
  padding-left: 4px;
}

.logo {
  flex: none;
}

.app-title {
  margin-left: 8px;
  font-size: 22px;
  letter-spacing: -0.1px;
}

.main-controls {
  margin-left: auto;
  display: flex;
  align-items: center;
  padding-right: 29px;
  color: #fff;
}

.main-controls .min {
  width: 12px;
  height: 4px;
  margin-right: 57px;
  margin-top: 8px;
  background: #fff;
}

.main-controls .max {
  width: 18px;
  height: 18px;
  box-sizing: border-box;
  border: 2px solid #fff;
  border-top-width: 3px;
  margin-right: 54px;
}

.ctl.close {
  position: relative;
  width: 16px;
  height: 16px;
}

.ctl.close::before,
.ctl.close::after {
  content: "";
  position: absolute;
  left: -2px;
  top: 6.5px;
  width: 20px;
  height: 2.6px;
  background: currentColor;
  transform: rotate(45deg);
}

.ctl.close::after {
  transform: rotate(-45deg);
}

.menubar {
  height: 46px;
  flex: none;
  display: flex;
  align-items: center;
  font-size: 22px;
  color: #4a4a4a;
  padding-left: 5px;
}

.grip {
  width: 0;
  height: 22px;
  flex: none;
  border-left: 3px dotted #b0b0b0;
  margin-right: 3px;
}

.grip-menu {
  margin-right: 7px;
}

.menu-item {
  padding: 0 9px;
  margin-right: 12px;
}

.tb-row {
  flex: none;
  display: flex;
  align-items: center;
  width: fit-content;
  background: #f0f0f0;
  padding-left: 5px;
  border-radius: 0 5px 5px 0;
}

.tb-one {
  height: 46px;
  width: 1266px;
  box-sizing: border-box;
}

.tb-two {
  height: 49px;
  margin-top: 1px;
  width: 1511px;
  box-sizing: border-box;
}

.btn {
  width: 44px;
  height: 42px;
  flex: none;
  display: flex;
  align-items: center;
  justify-content: center;
  box-sizing: border-box;
  border: solid transparent;
  border-width: 0 1px;
  background-clip: padding-box;
}

.btn.on {
  background-color: #c8c8c8;
}

.sep {
  width: 1px;
  height: 42px;
  flex: none;
  background: #d2d2d2;
  margin: 0 8px;
}

.sep.tight {
  margin: 0 7.5px;
}

.bar {
  width: 1px;
  height: 42px;
  flex: none;
  background: #d2d2d2;
}

.mdi {
  margin-top: 2px;
  display: grid;
  grid-template-columns: 1274px 1276px;
  grid-template-rows: 871px 611px;
  column-gap: 2px;
  padding-left: 5px;
  flex: none;
}

.win {
  display: flex;
  flex-direction: column;
  background: #e6e6e6;
  border-top: 1px solid #888;
  border-right: 1px solid #8a8a8a;
  box-sizing: border-box;
  padding: 0;
}

.win-title {
  height: 58px;
  flex: none;
  background: #2b5597;
  color: #c6ccd6;
  display: flex;
  align-items: center;
  padding: 10px 0 0 14px;
  box-sizing: border-box;
  font-size: 22px;
}

.win-title.low {
  height: 59px;
}

.win-name {
  margin-left: 9px;
  letter-spacing: -0.1px;
}

.win-controls {
  margin-left: auto;
  margin-top: -22px;
  display: flex;
  align-items: center;
  padding-right: 27px;
  color: #b9c0cb;
}

.win-right .win-controls {
  padding-right: 29px;
}

.win-controls .min {
  width: 13px;
  height: 4px;
  margin-top: 8px;
  margin-right: 58px;
  background: #b9c0cb;
}

.win-controls .max {
  width: 18px;
  height: 18px;
  box-sizing: border-box;
  border: 2px solid #b9c0cb;
  border-top-width: 3px;
  margin-right: 55px;
}

.client {
  margin: 1px 13px 0;
  background: #fff;
  overflow: hidden;
}

.win-right .client {
  margin-left: 14px;
  margin-right: 13px;
}

.map-client {
  height: 797px;
}

.chart-client {
  height: 799px;
}

.win .win-title.low + .chart-client {
  height: 536px;
}

.canvas {
  display: block;
}

.chart text {
  font-family: "Open Sans", sans-serif;
  fill: #111;
}

.gridline {
  stroke: #d8d8d8;
  stroke-width: 1;
}

.axis {
  stroke: #222;
  stroke-width: 1;
}

.series {
  fill: none;
  stroke: #111;
  stroke-width: 1.7;
}

.legend {
  fill: #fff;
  stroke: #ddd;
}

.chart .c-title {
  font-size: 31px;
}

.chart .c-axis {
  font-size: 26px;
}

.chart .c-tick {
  font-size: 20.5px;
}

.chart .c-legend {
  font-size: 21px;
}

.chart .c-side {
  font-family: "DejaVu Sans", sans-serif;
  font-size: 24.4px;
}

.chart .c-side.spaced {
  word-spacing: 6px;
}

.watches {
  height: 537px;
  background: #f0f0f0;
  display: flex;
  flex-direction: column;
  font-size: 20.4px;
}

.watch-bar {
  height: 53px;
  flex: none;
  display: flex;
  align-items: center;
  box-sizing: border-box;
  padding: 0 11px 9px 22px;
  color: #585858;
}

.watch-btn {
  margin-left: 10px;
  font-size: 22px;
}

.spacer {
  flex: 1;
}

.grid-wrap {
  flex: 1;
  min-height: 0;
  display: flex;
}

.grid {
  width: 1217px;
  background: #fff;
  overflow: hidden;
  color: #1a1a1a;
}

.grid-head {
  height: 36px;
  box-sizing: border-box;
  display: grid;
  grid-template-columns: 426px 395px 396px;
  align-items: center;
  background: #f0f0f0;
  border-top: 1px solid #bbb;
  border-bottom: 2px solid #aaa;
  font-size: 20.5px;
}

.grid-head span {
  padding-left: 11px;
  height: 100%;
  display: flex;
  align-items: center;
  border-left: 1px solid #e0e0e0;
}

.grid-head span:first-child {
  padding-left: 44px;
  border-left: none;
}

.grid-row {
  height: 33px;
  display: grid;
  grid-template-columns: 426px 395px 396px;
}

.cell {
  display: flex;
  align-items: center;
  padding-left: 5px;
  white-space: nowrap;
  border-left: 2px solid #f2f2f2;
  border-bottom: 2px solid #f0f0f0;
  box-sizing: border-box;
}

.cell.name {
  position: relative;
  border-left: none;
  margin-left: 67px;
  padding-left: 5px;
}

.grid-row.top .cell.name {
  margin-left: 35px;
  padding-left: 3px;
}

.caret-open {
  position: absolute;
  left: -27px;
  top: 7px;
}

.cell.child::before {
  content: "";
  position: absolute;
  left: -18px;
  top: -2px;
  bottom: -2px;
  width: 1px;
  background: #ccc;
}

.cell.child::after {
  content: "";
  position: absolute;
  left: -17px;
  top: 50%;
  width: 14px;
  height: 1px;
  background: #ccc;
}

.caret {
  position: absolute;
  z-index: 1;
  left: -25px;
  top: 6px;
}

.scroll {
  width: 32px;
  background: #f0f0f0;
  display: flex;
  flex-direction: column;
  align-items: center;
  padding: 15px 0 12px;
  box-sizing: border-box;
}

.chev {
  flex: none;
}

.thumb {
  width: 32px;
  height: 236px;
  background: #c8c8c8;
  margin-top: 10px;
  flex: none;
}

.status {
  flex: 1;
  display: flex;
  align-items: center;
  background: #f0f0f0;
  border-top: 1px solid #c8c8c8;
  padding: 1px 0 0 9px;
  font-size: 22px;
  color: #5a5a5a;
  position: relative;
}

.st-ready {
  width: 1978px;
}

.st-stop {
  width: 227px;
}

.st-elapsed {
  width: 355px;
}

.st-keys {
  color: #9a9a9a;
}

.st-grip {
  position: absolute;
  right: 0;
  bottom: 0;
}
</style>
